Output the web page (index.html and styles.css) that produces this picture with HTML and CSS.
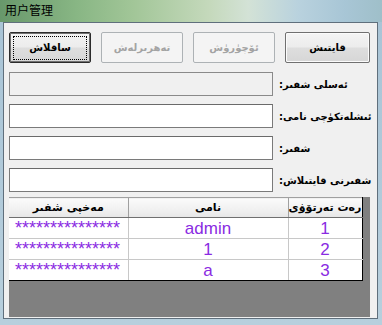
FILE: index.html
```html
<!DOCTYPE html>
<html>
<head>
<meta charset="utf-8">
<link rel="stylesheet" href="styles.css">
</head>
<body>
<div class="window">
  <div class="titlebar"><span class="title">用户管理</span></div>
  <div class="client">
    <div class="buttons">
      <button class="btn btn-default"><span class="focus">ساقلاش</span></button>
      <button class="btn" disabled>تەھرىرلەش</button>
      <button class="btn" disabled>ئۆچۈرۈش</button>
      <button class="btn btn-wide">قايتىش</button>
    </div>
    <div class="form">
      <div class="row"><div class="field field-disabled"></div><span class="label">ئەسلى شفىر:</span></div>
      <div class="row"><div class="field"></div><span class="label">ئىشلەتكۈچى نامى:</span></div>
      <div class="row"><div class="field"></div><span class="label">شفىر:</span></div>
      <div class="row"><div class="field"></div><span class="label">شفىرنى قايتىلاش:</span></div>
    </div>
    <div class="grid">
      <table class="table">
        <colgroup><col class="c1"><col class="c2"><col class="c3"></colgroup>
        <thead>
          <tr><th>مەخپى شفىر</th><th>نامى</th><th>رەت تەرتۆۋى</th></tr>
        </thead>
        <tbody>
          <tr><td class="pw">***************</td><td>admin</td><td>1</td></tr>
          <tr><td class="pw">***************</td><td>1</td><td>2</td></tr>
          <tr><td class="pw">***************</td><td>a</td><td>3</td></tr>
        </tbody>
      </table>
    </div>
  </div>
</div>
</body>
</html>
```
FILE: styles.css
```css
* { box-sizing: border-box; }
html, body { margin: 0; padding: 0; }
body {
  width: 382px;
  height: 325px;
  overflow: hidden;
  background: linear-gradient(90deg, #86aab8 0%, #9ab9c4 100%);
}
.window {
  width: 382px;
  height: 325px;
  background:
    linear-gradient(180deg, rgba(255,255,255,0) 0px, rgba(255,255,255,0) 22px, #a9c4d6 22px, #b7cfdd 100%),
    linear-gradient(90deg, #68986b 0%, #88b684 20%, #a2c698 35%, #c5d9bc 55%, #d3e2d6 65%, #b9d2de 78%, #a8c6d6 90%, #9fbfc9 100%);
  display: flex;
  flex-direction: column;
}
.titlebar {
  height: 22px;
  padding-left: 5px;
  display: flex;
  align-items: center;
}
.title {
  font-family: "Noto Sans CJK SC", sans-serif;
  font-size: 12px;
  color: #000;
  line-height: 1;
  margin-top: -2px;
}
.client {
  margin-left: 3px;
  width: 375px;
  height: 297px;
  background: #f0f0f0;
  border: 1px solid #5f6f7c;
  padding: 9px 0 0 5px;
}
.buttons {
  display: flex;
  gap: 10px;
  height: 31px;
}
.btn {
  width: 82px;
  height: 31px;
  padding: 0;
  margin: 0;
  border: 1px solid #707070;
  border-radius: 2px;
  background: linear-gradient(180deg, #f4f4f4 0%, #ececec 48%, #dedede 52%, #d6d6d6 100%);
  box-shadow: inset 0 0 0 1px #fbfbfb;
  font-family: "DejaVu Sans", sans-serif;
  font-weight: bold;
  font-size: 10px;
  color: #000;
  display: flex;
  align-items: center;
  justify-content: center;
  direction: rtl;
}
.btn-wide { width: 85px; }
.btn:disabled {
  color: #a3a3a3;
  border-color: #adb2b5;
  background: #f4f4f4;
  box-shadow: none;
}
.btn-default {
  border-color: #2b2b2b;
  box-shadow: inset 0 0 0 1px #707070;
}
.focus {
  width: 74px;
  height: 24px;
  border: 1px dotted #000;
  display: flex;
  align-items: center;
  justify-content: center;
}
.form {
  margin-top: 9px;
  display: flex;
  flex-direction: column;
  gap: 8px;
}
.row {
  display: flex;
  align-items: center;
  height: 24px;
}
.field {
  width: 264px;
  height: 24px;
  background: #fff;
  border: 1px solid #7a7a7a;
  border-top-color: #6a6a6a;
}
.field-disabled {
  background: #f0f0f0;
  border-color: #8a8a8a;
}
.label {
  margin-left: 6px;
  font-family: "DejaVu Sans", sans-serif;
  font-weight: bold;
  font-size: 10px;
  color: #000;
  direction: rtl;
  unicode-bidi: isolate;
}
.grid {
  margin-top: 5px;
  width: 361px;
  height: 120px;
  background: #808080;
}
.table {
  width: 353px;
  table-layout: fixed;
  border-collapse: collapse;
  background: #fff;
  border-right: 1px solid #000;
  border-bottom: 1px solid #000;
}
.c1 { width: 119px; }
.c2 { width: 160px; }
.c3 { width: 74px; }
.table th {
  height: 20px;
  padding: 0;
  background: linear-gradient(180deg, #fbfbfb 0%, #f0f0f0 60%, #e6e6e6 100%);
  border: 1px solid #a0a0a0;
  border-bottom-color: #6f6f6f;
  font-family: "DejaVu Sans", sans-serif;
  font-weight: bold;
  font-size: 11px;
  color: #000;
  direction: rtl;
  text-align: center;
  white-space: nowrap;
}
.table td {
  height: 21px;
  padding: 0;
  border: 1px solid #c8c8c8;
  font-family: "Liberation Sans", Arial, sans-serif;
  font-size: 17px;
  color: #8a2be2;
  text-align: center;
  line-height: 1;
  white-space: nowrap;
  overflow: hidden;
}
.table td.pw {
  text-align: left;
  padding-left: 6px;
  font-size: 18px;
}
.table tr td:first-child, .table tr th:first-child { border-left: none; }
.table tr:last-child td { border-bottom: 1px solid #000; }
.table tr td:last-child, .table tr th:last-child { border-right: 1px solid #000; }
```
